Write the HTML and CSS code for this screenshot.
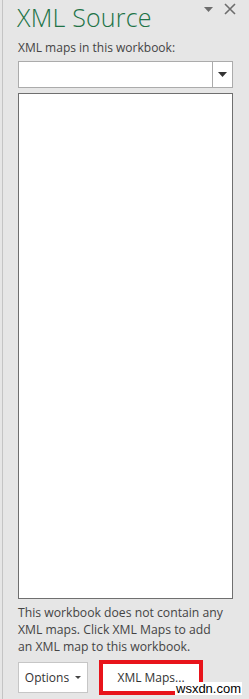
FILE: index.html
```html
<!DOCTYPE html>
<html>
<head>
<meta charset="utf-8">
<link rel="stylesheet" href="styles.css">
</head>
<body>
<div class="pane">
  <div class="header">
    <h1 class="title">XML Source</h1>
    <div class="tools">
      <svg class="menu" width="9" height="5" viewBox="0 0 9 5"><path d="M0 0H9L4.5 5Z" fill="#6d6d6d"/></svg>
      <svg class="close" width="12" height="12" viewBox="0 0 12 12"><path d="M1 1L11 11M11 1L1 11" stroke="#6d6d6d" stroke-width="1.6"/></svg>
    </div>
  </div>
  <div class="label">XML maps in this workbook:</div>
  <div class="combo">
    <div class="combo-field"></div>
    <div class="combo-btn"><svg width="9" height="5" viewBox="0 0 9 5"><path d="M0 0H9L4.5 5Z" fill="#333"/></svg></div>
  </div>
  <div class="list"></div>
  <p class="note">This workbook does not contain any<br>XML maps. Click XML Maps to add<br>an XML map to this workbook.</p>
  <div class="buttons">
    <div class="btn options">Options <svg width="6" height="3" viewBox="0 0 6 3"><path d="M0 0H6L3 3Z" fill="#444"/></svg></div>
    <div class="highlight"><div class="btn maps">XML Maps...</div></div>
  </div>
  <div class="cut">Verify Map for Export...</div>
</div>
<div class="watermark">wsxdn.com</div>
</body>
</html>
```
FILE: styles.css
```css
html, body {
  margin: 0;
  padding: 0;
  height: 699px;
  overflow: hidden;
  background: #e6e6e6;
  font-family: "Open Sans", "Noto Sans", sans-serif;
  color: #444;
}
.pane {
  margin-left: 2px;
  border-left: 1px solid #c4c4c4;
  padding: 0 16px 0 15px;
  height: 699px;
  box-sizing: border-box;
  display: flex;
  flex-direction: column;
  overflow: hidden;
}
.pane > * { flex-shrink: 0; }
.header {
  display: flex;
  justify-content: space-between;
  align-items: flex-start;
  height: 36px;
}
.title {
  margin: 0;
  font-weight: 300;
  font-size: 25px;
  line-height: 34px;
  color: #217346;
  letter-spacing: 0.2px;
  margin-left: -1px;
  white-space: nowrap;
}
.tools {
  display: flex;
  align-items: center;
  gap: 11px;
  padding-top: 3px;
  margin-right: -3px;
}
.menu { margin-top: 1px; }
.label {
  font-size: 12px;
  line-height: 17px;
  color: #444;
  margin-top: 3px;
}
.combo {
  margin-top: 5px;
  height: 27px;
  border: 1px solid #ababab;
  background: #fff;
  display: flex;
  box-sizing: border-box;
}
.combo-field { flex: 1; }
.combo-btn {
  width: 19px;
  border-left: 1px solid #ababab;
  display: flex;
  align-items: center;
  justify-content: center;
}
.list {
  margin-top: 5px;
  height: 506px;
  border: 1px solid #6f6f6f;
  background: #fff;
  box-sizing: border-box;
}
.note {
  margin: 5px 0 0 0;
  font-size: 12.2px;
  line-height: 17px;
  color: #444;
  white-space: nowrap;
}
.buttons {
  display: flex;
  align-items: center;
  gap: 11px;
  margin-top: 5px;
}
.btn {
  background: #fff;
  font-size: 12px;
  color: #333;
  display: flex;
  align-items: center;
  justify-content: center;
  box-sizing: border-box;
}
.options {
  width: 70px;
  height: 31px;
  border: 1px solid #c6c6c6;
  gap: 6px;
}
.highlight {
  border: 4px solid #e8141b;
  width: 104px;
  height: 35px;
  box-sizing: border-box;
}
.maps {
  height: 100%;
  width: 100%;
}
.cut {
  margin-top: 2px;
  font-size: 12px;
  line-height: 17px;
  color: #999;
  padding-left: 10px;
}
.watermark {
  position: absolute;
  left: 175px;
  top: 682px;
  font-family: "Liberation Sans", sans-serif;
  font-size: 13px;
  line-height: 13px;
  color: #000;
  background: #fff;
  padding: 0 1px;
}
```
